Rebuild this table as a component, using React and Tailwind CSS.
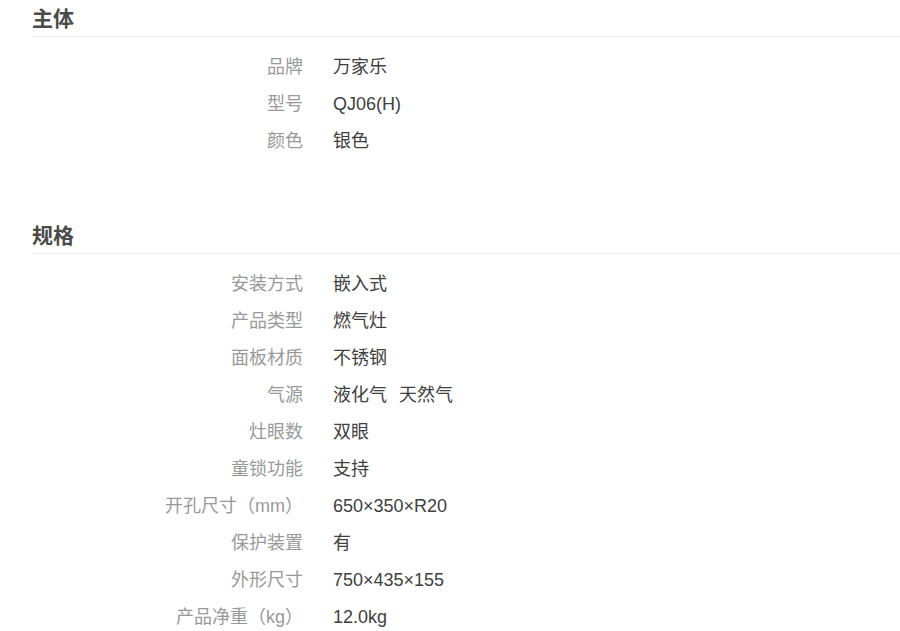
import React from "react";

const SECTIONS = [
  {
    title: "主体",
    rows: [
      ["品牌", ["万家乐"]],
      ["型号", ["QJ06(H)"]],
      ["颜色", ["银色"]],
    ],
  },
  {
    title: "规格",
    rows: [
      ["安装方式", ["嵌入式"]],
      ["产品类型", ["燃气灶"]],
      ["面板材质", ["不锈钢"]],
      ["气源", ["液化气", "天然气"]],
      ["灶眼数", ["双眼"]],
      ["童锁功能", ["支持"]],
      ["开孔尺寸（mm）", ["650×350×R20"]],
      ["保护装置", ["有"]],
      ["外形尺寸", ["750×435×155"]],
      ["产品净重（kg）", ["12.0kg"]],
    ],
  },
];

export default function App() {
  return (
    <div
      className="w-[900px] h-[631px] overflow-hidden bg-white pl-8"
      style={{ fontFamily: '"Liberation Sans", "Noto Sans CJK SC", sans-serif' }}
    >
      {SECTIONS.map((sec, i) => (
        <div key={sec.title} className={i > 0 ? "mt-[57px]" : ""}>
          {/* 标题 */}
          <div className="h-[37px] border-b border-[#eeeeee] flex items-center">
            <h3 className="text-[21px] font-bold text-[#4a4a4a] leading-none">{sec.title}</h3>
          </div>
          <div className="pt-[12px]">
            {sec.rows.map(([label, values]) => (
              <div key={label} className="flex h-[37px] items-center text-[18px]">
                <div className="w-[271px] text-right text-[#999999]">{label}</div>
                <div className="ml-[30px] flex gap-3 text-[#404040]">
                  {values.map(v => <span key={v}>{v}</span>)}
                </div>
              </div>
            ))}
          </div>
        </div>
      ))}
    </div>
  );
}
